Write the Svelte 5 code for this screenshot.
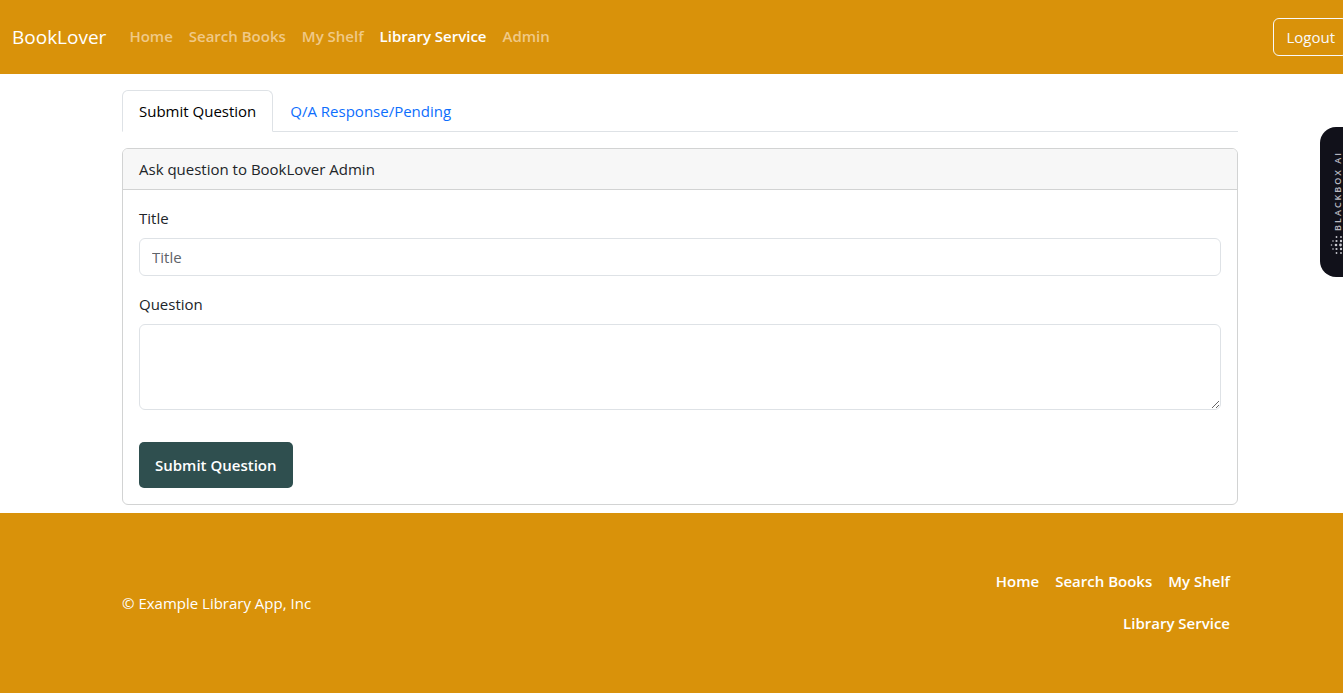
<script>
  let title = $state('');
  let question = $state('');
  const navLinks = ['Home', 'Search Books', 'My Shelf', 'Library Service', 'Admin'];
  const footerLinks = ['Home', 'Search Books', 'My Shelf', 'Library Service'];
  // Dots of the assistant badge: column, row, radius
  const dots = [
    [6.5, 2, 0.9], [11, 2, 0.9], [15, 2, 0.9],
    [3, 6, 0.8], [6.5, 6, 1.1], [11, 6, 1.2], [15, 6, 1.1], [18, 6, 0.8],
    [1.5, 10, 0.8], [6, 10, 1.3], [10.5, 10, 1.4], [15, 10, 1.3], [18.5, 10, 0.8],
    [3, 14, 0.8], [6.5, 14, 1.1], [11, 14, 1.2], [15, 14, 1.1], [18, 14, 0.8],
    [6.5, 18, 0.9], [11, 18, 0.9], [15, 18, 0.9]
  ];
</script>

<div class="viewport">
  <div class="page">
    <header class="navbar">
      <a class="brand" href="#home">BookLover</a>
      <nav>
        {#each navLinks as link}
          <a href="#nav" class:active={link === 'Library Service'}>{link}</a>
        {/each}
      </nav>
      <a class="logout" href="#logout">Logout</a>
    </header>

    <main class="container">
      <div class="tabs" role="tablist">
        <button type="button" role="tab" aria-selected="true" class="selected">Submit Question</button>
        <button type="button" role="tab" aria-selected="false">Q/A Response/Pending</button>
      </div>

      <section class="card">
        <div class="card-header">Ask question to BookLover Admin</div>
        <form class="card-body" onsubmit={(e) => e.preventDefault()}>
          <div class="field">
            <label for="title">Title</label>
            <input id="title" type="text" placeholder="Title" bind:value={title} />
          </div>
          <div class="field">
            <label for="question">Question</label>
            <textarea id="question" rows="3" bind:value={question}></textarea>
          </div>
          <button class="submit" type="submit">Submit Question</button>
        </form>
      </section>
    </main>

    <footer>
      <div class="container footer-row">
        <p>© Example Library App, Inc</p>
        <ul>
          {#each footerLinks as link}
            <li><a href="#footer">{link}</a></li>
          {/each}
        </ul>
      </div>
    </footer>
  </div>

  <aside class="badge">
    <span>BLACKBOX AI</span>
    <svg viewBox="0 0 20 20" width="20" height="20" aria-hidden="true">
      {#each dots as [cx, cy, r]}
        <circle {cx} {cy} {r} fill="#c9c9cf" />
      {/each}
    </svg>
  </aside>
</div>

<style>
  :global(body) {
    margin: 0;
    background: #fff;
  }
  .viewport, .viewport * {
    box-sizing: border-box;
  }
  .viewport {
    position: relative;
    overflow: hidden;
    font-family: "Segoe UI", "Open Sans", "Noto Sans", sans-serif;
    font-size: 15px;
    line-height: 24px;
    color: #212529;
  }
  /* The page runs on under the right edge by the width of a scrollbar */
  .page {
    margin-right: -17px;
  }
  a {
    text-decoration: none;
  }
  button, input, textarea {
    font: inherit;
  }
  .navbar {
    display: flex;
    align-items: center;
    padding: 18px 12px;
    background: #d9920a;
  }
  .brand {
    margin-right: 15px;
    font-size: 19px;
    line-height: 30px;
    color: #fff;
  }
  nav {
    display: flex;
    flex: 1;
  }
  nav a {
    padding: 6px 8px 8px;
    font-weight: 600;
    color: #f0c987;
  }
  nav .active {
    color: #fff;
  }
  .logout {
    padding: 6px 12px;
    border: 1px solid #f8f9fa;
    border-radius: 6px;
    color: #f8f9fa;
  }
  .container {
    max-width: 1140px;
    margin: 0 auto;
    padding: 0 12px;
  }
  main.container {
    padding-top: 16px;
    padding-bottom: 8px;
  }
  .tabs {
    display: flex;
    margin-bottom: 16px;
    border-bottom: 1px solid #dee2e6;
  }
  .tabs button {
    margin-bottom: -1px;
    padding: 8px 16px;
    border: 1px solid transparent;
    border-radius: 6px 6px 0 0;
    background: none;
    color: #0d6efd;
  }
  .tabs .selected {
    border-color: #dee2e6 #dee2e6 #fff;
    background: #fff;
    color: #000;
  }
  .card {
    border: 1px solid #d2d3d3;
    border-radius: 6px;
    overflow: hidden;
  }
  .card-header {
    padding: 8px 16px;
    border-bottom: 1px solid #d2d3d3;
    background: #f7f7f7;
  }
  .card-body {
    padding: 16px;
  }
  .field {
    margin-bottom: 16px;
  }
  label {
    display: block;
    margin-bottom: 8px;
  }
  input, textarea {
    display: block;
    width: 100%;
    padding: 6px 12px;
    border: 1px solid #dee2e6;
    border-radius: 6px;
    background: #fff;
    color: #212529;
  }
  input {
    height: 38px;
  }
  textarea {
    min-height: 86px;
    resize: vertical;
  }
  input::placeholder {
    color: #5f6469;
    opacity: 1;
  }
  .submit {
    display: block;
    margin-top: 32px;
    padding: 11px 16px;
    border: 0;
    border-radius: 5px;
    background: #2f4f4f;
    color: #fff;
    font-weight: 600;
  }
  footer {
    padding: 48px 0;
    background: #d9920a;
    color: #fff;
  }
  .footer-row {
    display: flex;
    align-items: center;
    justify-content: space-between;
  }
  .footer-row p {
    margin: 0;
  }
  .footer-row ul {
    display: flex;
    flex-wrap: wrap;
    justify-content: flex-end;
    width: 33%;
    margin: 0;
    padding: 0;
    list-style: none;
  }
  .footer-row a {
    display: block;
    padding: 8px 8px 10px;
    font-weight: 600;
    color: #fff;
  }
  .badge {
    position: absolute;
    top: 127px;
    right: -17px;
    display: flex;
    flex-direction: column;
    align-items: flex-start;
    justify-content: flex-end;
    gap: 4px;
    width: 40px;
    height: 150px;
    padding: 0 0 22px 10px;
    border-radius: 16px;
    background: #11111a;
    color: #b9b9c0;
  }
  .badge span {
    margin-left: 4px;
    writing-mode: vertical-rl;
    transform: rotate(180deg);
    font-family: "Open Sans", sans-serif;
    font-size: 9px;
    line-height: 8px;
    font-weight: 600;
    letter-spacing: 2px;
  }
</style>
